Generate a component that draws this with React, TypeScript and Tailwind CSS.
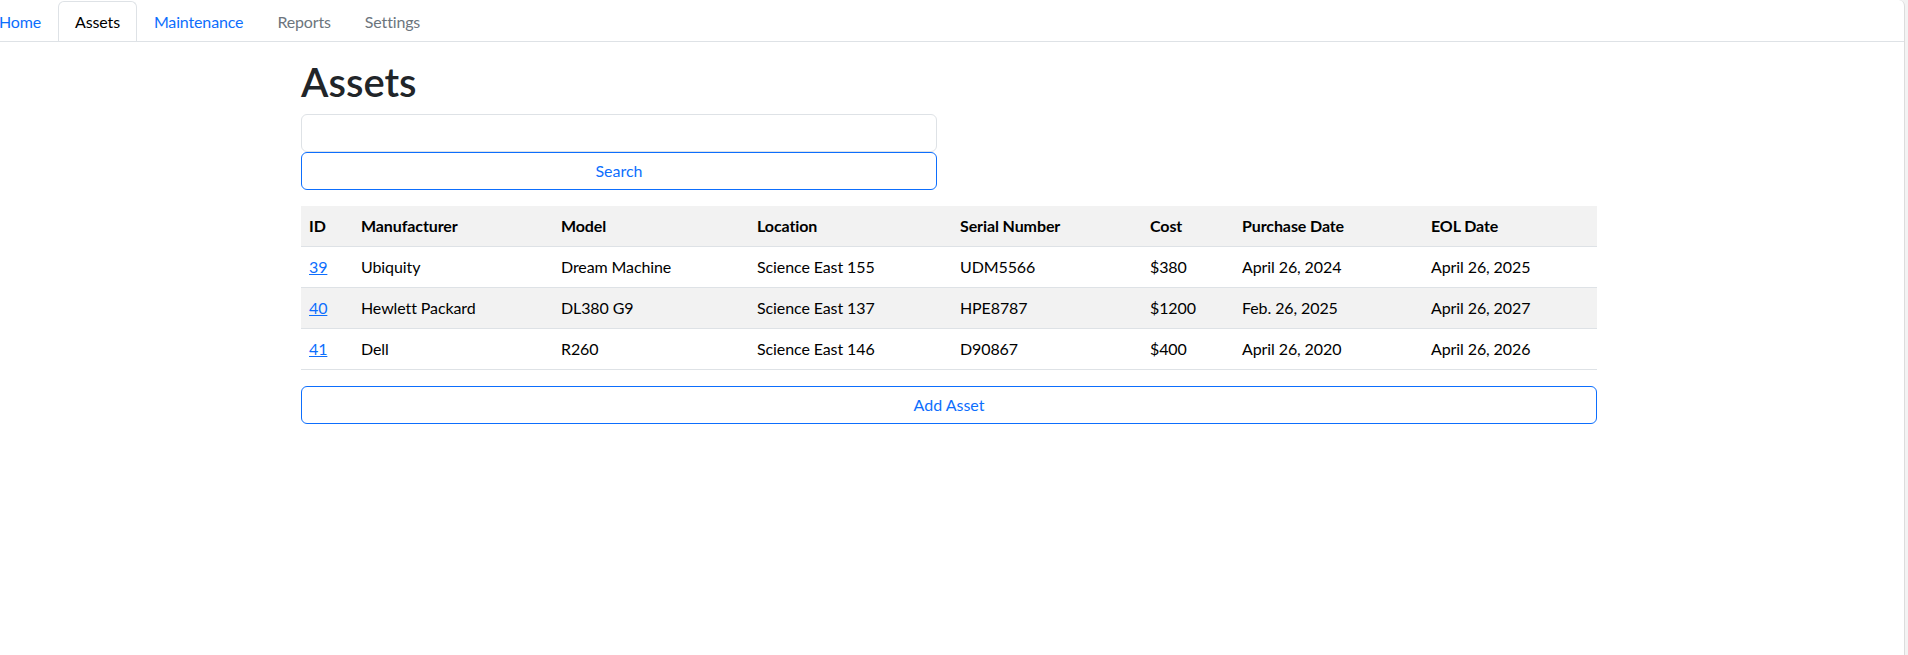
const font = { fontFamily: "Lato, 'Open Sans', sans-serif" };

type Asset = {
  id: number;
  manufacturer: string;
  model: string;
  location: string;
  serial: string;
  cost: string;
  purchased: string;
  eol: string;
};

const assets: Asset[] = [
  { id: 39, manufacturer: "Ubiquity", model: "Dream Machine", location: "Science East 155", serial: "UDM5566", cost: "$380", purchased: "April 26, 2024", eol: "April 26, 2025" },
  { id: 40, manufacturer: "Hewlett Packard", model: "DL380 G9", location: "Science East 137", serial: "HPE8787", cost: "$1200", purchased: "Feb. 26, 2025", eol: "April 26, 2027" },
  { id: 41, manufacturer: "Dell", model: "R260", location: "Science East 146", serial: "D90867", cost: "$400", purchased: "April 26, 2020", eol: "April 26, 2026" },
];

const tabs = [
  { label: "Home", className: "text-[#0d6efd]" },
  { label: "Assets", active: true, className: "text-black" },
  { label: "Maintenance", className: "text-[#0d6efd]" },
  { label: "Reports", className: "text-[#6c757d]" },
  { label: "Settings", className: "text-[#6c757d]" },
];

const columns = [
  { label: "ID", width: "w-[52px]" },
  { label: "Manufacturer", width: "w-[200px]" },
  { label: "Model", width: "w-[196px]" },
  { label: "Location", width: "w-[203px]" },
  { label: "Serial Number", width: "w-[190px]" },
  { label: "Cost", width: "w-[92px]" },
  { label: "Purchase Date", width: "w-[189px]" },
  { label: "EOL Date", width: "w-[174px]" },
];

function NavTabs() {
  return (
    <nav className="h-[42px] overflow-hidden border-b border-[#dee2e6] pt-px">
      <ul className="-ml-[18px] flex">
        {tabs.map((t) => (
          <li key={t.label}>
            <a
              href="#"
              className={
                "block rounded-t-[6px] border px-4 py-2 text-base leading-6 tracking-[-0.15px] " +
                (t.active ? "border-[#dee2e6] border-b-white bg-white " : "border-transparent ") +
                t.className
              }
            >
              {t.label}
            </a>
          </li>
        ))}
      </ul>
    </nav>
  );
}

export default function App() {
  return (
    <div className="min-h-[655px] w-[1908px] bg-[#f3f3f3] text-[#212529]" style={font}>
      <div className="min-h-[655px] w-[1905px] overflow-hidden rounded-tr-[6px] border-r border-[#dcdcdc] bg-white">
        <NavTabs />
        <main className="ml-[289px] w-[1320px] px-3 pt-4">
          <h1 className="mb-2 text-[40px] font-semibold leading-[48px] text-[#212529]">Assets</h1>
          <form className="w-[636px]" onSubmit={(e) => e.preventDefault()}>
            <input
              type="text"
              className="block h-[38px] w-full rounded-[6px] border border-[#dee2e6] px-3 text-base outline-none"
            />
            <button
              type="submit"
              className="block h-[38px] w-full rounded-[6px] border border-[#0d6efd] text-base text-[#0d6efd]"
            >
              Search
            </button>
          </form>

          <table className="mt-4 mb-4 w-[1296px] table-fixed border-collapse text-base leading-6 tracking-[-0.1px] text-black">
            <thead>
              <tr className="border-b border-[#dee2e6] bg-[#f2f2f2]">
                {columns.map((c) => (
                  <th key={c.label} className={"px-2 py-2 text-left font-bold " + c.width}>
                    {c.label}
                  </th>
                ))}
              </tr>
            </thead>
            <tbody>
              {assets.map((a, i) => (
                <tr key={a.id} className={"border-b border-[#dee2e6] " + (i % 2 === 1 ? "bg-[#f2f2f2]" : "bg-white")}>
                  <td className="px-2 py-2">
                    <a href="#" className="text-[#0d6efd] underline">
                      {a.id}
                    </a>
                  </td>
                  <td className="px-2 py-2">{a.manufacturer}</td>
                  <td className="px-2 py-2">{a.model}</td>
                  <td className="px-2 py-2">{a.location}</td>
                  <td className="px-2 py-2">{a.serial}</td>
                  <td className="px-2 py-2">{a.cost}</td>
                  <td className="px-2 py-2">{a.purchased}</td>
                  <td className="px-2 py-2">{a.eol}</td>
                </tr>
              ))}
            </tbody>
          </table>

          <button
            type="button"
            className="block h-[38px] w-[1296px] rounded-[6px] border border-[#0d6efd] text-base text-[#0d6efd]"
          >
            Add Asset
          </button>
        </main>
      </div>
    </div>
  );
}
